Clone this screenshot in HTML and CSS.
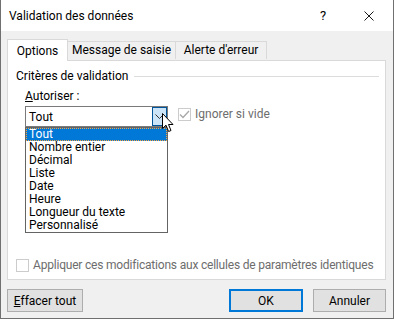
FILE: index.html
```html
<!DOCTYPE html>
<html lang="fr">
<head>
    <meta charset="UTF-8">
    <title>Validation des données</title>
    <link rel="stylesheet" href="styles.css">
</head>
<body>
    <div class="dialog">
        <div class="titlebar">
            <span class="title">Validation des données</span>
            <span class="title-btn help">?</span>
            <span class="title-btn close">
                <svg width="10" height="10" viewBox="0 0 10 10"><path d="M0.5 0.5 L9.5 9.5 M9.5 0.5 L0.5 9.5" stroke="#1a1a1a" stroke-width="1"/></svg>
            </span>
        </div>

        <div class="content">
            <div class="tabs">
                <div class="tab active">Options</div>
                <div class="tab tab-msg">Message de saisie</div>
                <div class="tab tab-alert">Alerte d'erreur</div>
            </div>

            <div class="panel">
                <div class="group-head">
                    <span>Critères de validation</span>
                    <span class="group-line"></span>
                </div>

                <div class="allow-label"><u>A</u>utoriser :</div>

                <div class="allow-row">
                    <div class="combo">
                        <span class="combo-value">Tout</span>
                        <span class="combo-btn">
                            <svg width="9" height="5" viewBox="0 0 9 5"><path d="M0.5 0.5 L4.5 4.5 L8.5 0.5" fill="none" stroke="#333" stroke-width="1"/></svg>
                        </span>
                        <ul class="dropdown">
                            <li class="selected">Tout</li>
                            <li>Nombre entier</li>
                            <li>Décimal</li>
                            <li>Liste</li>
                            <li>Date</li>
                            <li>Heure</li>
                            <li>Longueur du texte</li>
                            <li>Personnalisé</li>
                        </ul>
                        <svg class="cursor" width="12" height="20" viewBox="0 0 12 20">
                            <path d="M0.5 0.5 L0.5 15.5 L4 12.2 L6.6 18.5 L9 17.5 L6.5 11.5 L11 11.5 Z" fill="#fff" stroke="#000" stroke-width="1" stroke-linejoin="round"/>
                        </svg>
                    </div>

                    <label class="check disabled">
                        <span class="box">
                            <svg width="11" height="9" viewBox="0 0 11 9"><path d="M1 4.5 L4 7.5 L10 1" fill="none" stroke="#a8a8a8" stroke-width="1.3"/></svg>
                        </span>
                        Ignorer si vide
                    </label>
                </div>

                <label class="check disabled apply">
                    <span class="box"></span>
                    Appliquer ces modifications aux cellules de paramètres identiques
                </label>
            </div>

            <div class="buttons">
                <button class="btn"><u>E</u>ffacer tout</button>
                <span class="spacer"></span>
                <button class="btn default">OK</button>
                <button class="btn">Annuler</button>
            </div>
        </div>
    </div>
</body>
</html>
```

FILE: styles.css
```css
body {
    margin: 0;
    padding: 0;
    background-color: #f0f0f0;
}

.dialog {
    width: 394px;
    height: 319px;
    box-sizing: border-box;
    border: 1px solid #707070;
    border-top: none;
    background-color: #f0f0f0;
    font-family: Roboto, "Liberation Sans", sans-serif;
    font-size: 12px;
    color: #000;
    overflow: hidden;
}

.titlebar {
    height: 31px;
    background-color: #fff;
    display: flex;
    align-items: center;
    padding-left: 8px;
}

.title {
    flex: 1;
    font-size: 12px;
}

.title-btn {
    width: 46px;
    height: 31px;
    display: flex;
    align-items: center;
    justify-content: center;
}

.help {
    font-size: 13px;
}

.close {
    margin-right: 1px;
}

.content {
    padding: 7px 7px 0 6px;
}

.tabs {
    display: flex;
    align-items: flex-end;
    height: 22px;
    position: relative;
    z-index: 1;
}

.tab {
    height: 18px;
    box-sizing: border-box;
    border: 1px solid #d9d9d9;
    border-bottom: none;
    line-height: 17px;
    text-align: center;
    background-color: #f0f0f0;
    margin-bottom: 1px;
}

.tab + .tab {
    border-left: none;
}

.tab.active {
    width: 61px;
    height: 22px;
    background-color: #fff;
    margin-bottom: -1px;
    line-height: 22px;
}

.tab-msg {
    width: 108px;
}

.tab-alert {
    width: 91px;
}

.panel {
    height: 220px;
    box-sizing: border-box;
    border: 1px solid #d9d9d9;
    background-color: #fff;
    display: flex;
    flex-direction: column;
    position: relative;
}

.group-head {
    display: flex;
    align-items: center;
    height: 16px;
    margin-top: 7px;
    padding-left: 8px;
}

.group-line {
    flex: 1;
    height: 1px;
    background-color: #dcdcdc;
    margin: 1px 6px 0 6px;
}

.allow-label {
    margin: 4px 0 0 17px;
    height: 17px;
    line-height: 17px;
}

.allow-row {
    display: flex;
    align-items: flex-start;
    margin: 1px 0 0 17px;
}

.combo {
    width: 143px;
    height: 21px;
    box-sizing: border-box;
    border: 1px solid #7a7a7a;
    display: flex;
    align-items: center;
    position: relative;
}

.combo-value {
    flex: 1;
    padding-left: 3px;
}

.combo-btn {
    width: 15px;
    height: 19px;
    box-sizing: border-box;
    background-color: #cce4f7;
    border: 1px solid #005499;
    display: flex;
    align-items: center;
    justify-content: center;
}

.dropdown {
    position: absolute;
    left: -1px;
    top: 20px;
    width: 143px;
    box-sizing: border-box;
    margin: 0;
    padding: 0;
    list-style: none;
    background-color: #fff;
    border: 1px solid #646464;
}

.dropdown li {
    height: 13px;
    line-height: 13px;
    padding-left: 3px;
}

.dropdown li.selected {
    background-color: #0078d7;
    color: #fff;
    outline: 1px dotted #f7a440;
    outline-offset: -1px;
}

.cursor {
    position: absolute;
    left: 136px;
    top: 6px;
    z-index: 2;
}

.check {
    display: flex;
    align-items: center;
    gap: 4px;
    white-space: nowrap;
}

.check.disabled {
    color: #6d6d6d;
}

.box {
    width: 13px;
    height: 13px;
    box-sizing: border-box;
    border: 1px solid #cccccc;
    background-color: #fff;
    display: flex;
    align-items: center;
    justify-content: center;
}

.allow-row .check {
    margin: 1px 0 0 10px;
}

.apply {
    margin: auto 0 7px 8px;
    letter-spacing: -0.2px;
}

.buttons {
    display: flex;
    margin-top: 9px;
    gap: 10px;
}

.spacer {
    flex: 1;
}

.btn {
    height: 23px;
    box-sizing: border-box;
    background-color: #e1e1e1;
    border: 1px solid #adadad;
    font-family: inherit;
    font-size: 12px;
    color: #000;
    padding: 0;
    width: 73px;
}

.btn:first-child {
    width: 76px;
}

.btn.default {
    border: 2px solid #0078d7;
    width: 74px;
}
```
